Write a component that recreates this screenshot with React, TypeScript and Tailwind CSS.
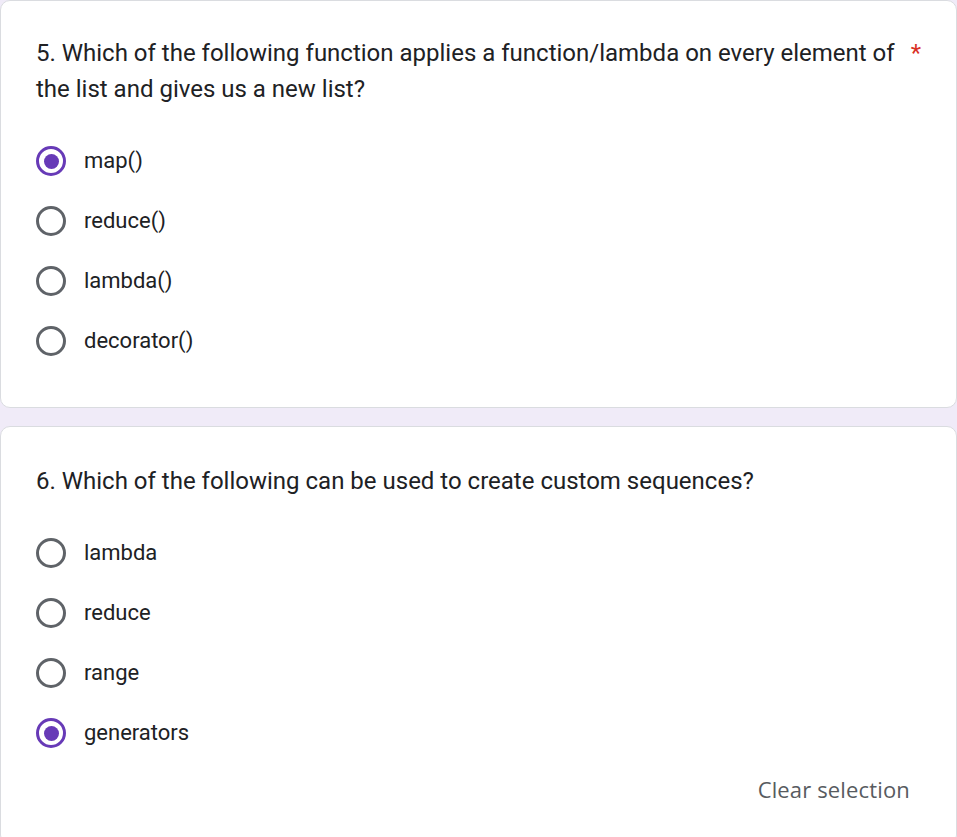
import React from "react";

interface QuestionProps {
  title: string;
  required?: boolean;
  options: string[];
  selected: number;
  showClear?: boolean;
  className?: string;
}

const Radio: React.FC<{ checked: boolean }> = ({ checked }) => (
  <span
    className={`flex h-[30px] w-[30px] shrink-0 items-center justify-center rounded-full border-[3px] ${
      checked ? "border-[#673ab7]" : "border-[#5f6368]"
    }`}
  >
    {checked && <span className="h-[15px] w-[15px] rounded-full bg-[#673ab7]" />}
  </span>
);

const Question: React.FC<QuestionProps> = ({
  title,
  required,
  options,
  selected,
  showClear,
  className,
}) => {
  return (
    <div
      className={`rounded-[10px] border border-[#dadce0] bg-white pl-[35px] pr-[35px] ${className ?? ""}`}
    >
      <div className="flex text-[24px] leading-[36px] text-[#202124]">
        <div className="flex-1">{title}</div>
        {required && <span className="pl-[14px] text-[#d93025]">*</span>}
      </div>
      <div className="mt-[24px] flex flex-col">
        {options.map((opt, i) => (
          <div key={opt} className="flex h-[60px] items-center gap-[18px]">
            <Radio checked={i === selected} />
            <span className="text-[22px] leading-[30px] text-[#202124]">{opt}</span>
          </div>
        ))}
      </div>
      {showClear && (
        <div className="flex justify-end pr-[11px] pt-[11px]">
          <span
            className="text-[22px] font-medium leading-[30px] tracking-[0.15px] text-[#575b60]"
            style={{ fontFamily: '"Open Sans", Roboto, sans-serif' }}
          >
            Clear selection
          </span>
        </div>
      )}
    </div>
  );
};

export default function App() {
  return (
    <div
      className="min-h-[837px] w-[957px] overflow-hidden bg-[#f0ebf8]"
      style={{ fontFamily: "Roboto, 'Liberation Sans', sans-serif" }}
    >
      <Question
        className="pt-[34px] pb-[36px]"
        title="5. Which of the following function applies a function/lambda on every element of the list and gives us a new list?"
        required
        options={["map()", "reduce()", "lambda()", "decorator()"]}
        selected={0}
      />
      <Question
        className="mt-[18px] pt-[36px] pb-[40px]"
        title="6. Which of the following can be used to create custom sequences?"
        options={["lambda", "reduce", "range", "generators"]}
        selected={3}
        showClear
      />
    </div>
  );
}
